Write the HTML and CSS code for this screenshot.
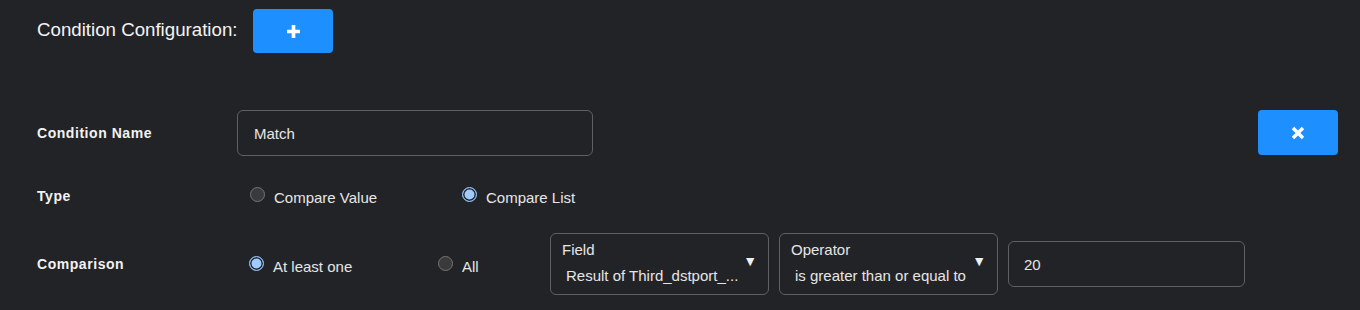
FILE: index.html
```html
<!DOCTYPE html>
<html>
<head>
<meta charset="utf-8">
<link rel="stylesheet" href="styles.css">
</head>
<body>
<div class="page">
  <div class="header">
    <span class="title">Condition Configuration:</span>
    <button class="btn btn-add"><svg width="15" height="15" viewBox="0 0 14 14"><path d="M5.3 1h3.4v4.3H13v3.4H8.7V13H5.3V8.7H1V5.3h4.3z" fill="#fff"/></svg></button>
  </div>

  <div class="condition">
    <div class="row row-name">
      <div class="label">Condition Name</div>
      <div class="input name-input">Match</div>
      <div class="spacer"></div>
      <button class="btn btn-del"><svg width="14" height="14" viewBox="0 0 14 14"><path d="M3.2 0.8l3.8 3.8 3.8-3.8 2.4 2.4-3.8 3.8 3.8 3.8-2.4 2.4-3.8-3.8-3.8 3.8-2.4-2.4 3.8-3.8-3.8-3.8z" fill="#fff"/></svg></button>
    </div>

    <div class="row row-type">
      <div class="label">Type</div>
      <div class="radios type-radios">
        <label class="radio opt-value"><span class="dot"></span>Compare Value</label>
        <label class="radio"><span class="dot on"></span>Compare List</label>
      </div>
    </div>

    <div class="row row-cmp">
      <div class="label">Comparison</div>
      <div class="radios cmp-radios">
        <label class="radio opt-least"><span class="dot on"></span>At least one</label>
        <label class="radio opt-all"><span class="dot"></span>All</label>
      </div>
      <div class="select sel-field">
        <div class="sel-label">Field</div>
        <div class="sel-value">Result of Third_dstport_...</div>
        <span class="arrow">▼</span>
      </div>
      <div class="select sel-op">
        <div class="sel-label">Operator</div>
        <div class="sel-value">is greater than or equal to</div>
        <span class="arrow">▼</span>
      </div>
      <div class="input value-input">20</div>
    </div>
  </div>
</div>
</body>
</html>
```

FILE: styles.css
```css
html, body {
  margin: 0;
  padding: 0;
  background: #222326;
}
body {
  font-family: "Liberation Sans", Arial, sans-serif;
  color: #ececec;
  width: 1360px;
  height: 310px;
  overflow: hidden;
}
.page {
  padding: 9px 22px 0 37px;
}
.header {
  display: flex;
  align-items: center;
  height: 44px;
}
.title {
  font-size: 18.7px;
  color: #f4f4f4;
  width: 216px;
  padding-bottom: 2px;
}
.btn {
  border: none;
  background: #1e8fff;
  border-radius: 4px;
  width: 80px;
  height: 44px;
  display: flex;
  align-items: center;
  justify-content: center;
  padding: 0;
}
.btn-del {
  height: 45px;
  margin-top: -1px;
}
.condition {
  margin-top: 57px;
}
.row {
  display: flex;
  align-items: center;
}
.label {
  width: 200px;
  flex: none;
  font-size: 14px;
  font-weight: bold;
  letter-spacing: 0.55px;
  color: #f2f2f2;
}
.input {
  box-sizing: border-box;
  border: 1px solid #5f6063;
  border-radius: 6px;
  font-size: 15px;
  color: #e6e6e6;
  display: flex;
  align-items: center;
  padding-left: 16px;
}
.name-input {
  width: 356px;
  height: 46px;
}
.spacer {
  flex: 1;
}
.row-type {
  margin-top: 21px;
  height: 37px;
}
.radios {
  display: flex;
  align-items: center;
  padding-left: 12px;
  padding-top: 4px;
}
.type-radios {
  padding-left: 13px;
}
.radio {
  display: flex;
  align-items: center;
  font-size: 15px;
  color: #e6e6e6;
}
.radio .dot {
  box-sizing: border-box;
  width: 15px;
  height: 15px;
  border-radius: 50%;
  border: 1.5px solid #747474;
  background: #3a3a3c;
  margin-right: 9px;
  margin-top: -6px;
}
.radio .dot.on {
  background: #a0cbff;
  border: 1.5px solid #8fbff5;
  box-shadow: inset 0 0 0 1.5px #222326;
}
.opt-value {
  width: 212px;
}
.row-cmp {
  margin-top: 19px;
}
.cmp-radios {
  padding-left: 12px;
  width: 313px;
  flex: none;
  box-sizing: border-box;
}
.opt-least {
  width: 189px;
}
.select {
  box-sizing: border-box;
  position: relative;
  width: 219px;
  height: 62px;
  border: 1px solid #5f6063;
  border-radius: 6px;
  padding: 7px 0 0 11px;
  margin-right: 10px;
  font-size: 15px;
  color: #e6e6e6;
}
.sel-label {
  line-height: 17px;
}
.sel-value {
  margin-top: 9px;
  padding-left: 4px;
  line-height: 17px;
}
.arrow {
  position: absolute;
  right: 11px;
  top: 19px;
  font-size: 14px;
  color: #f0f0f0;
}
.value-input {
  width: 237px;
  height: 46px;
  padding-left: 15px;
  margin-top: 0;
}
```
